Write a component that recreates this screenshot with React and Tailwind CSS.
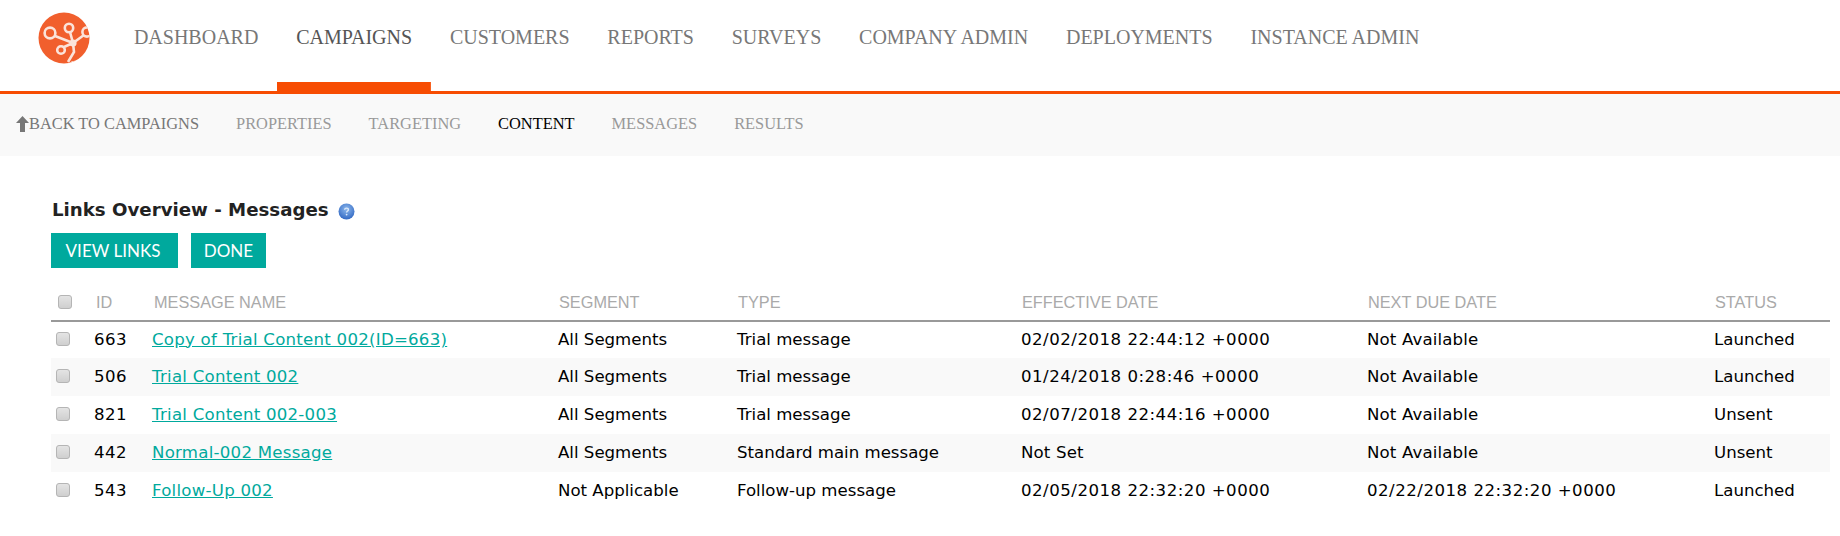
const mainNav = ['DASHBOARD', 'CAMPAIGNS', 'CUSTOMERS', 'REPORTS', 'SURVEYS', 'COMPANY ADMIN', 'DEPLOYMENTS', 'INSTANCE ADMIN']
const subNav = ['PROPERTIES', 'TARGETING', 'CONTENT', 'MESSAGES', 'RESULTS']

const messages = [
  { id: 663, name: 'Copy of Trial Content 002(ID=663)', segment: 'All Segments', type: 'Trial message', effective: '02/02/2018 22:44:12 +0000', next: 'Not Available', status: 'Launched' },
  { id: 506, name: 'Trial Content 002', segment: 'All Segments', type: 'Trial message', effective: '01/24/2018 0:28:46 +0000', next: 'Not Available', status: 'Launched' },
  { id: 821, name: 'Trial Content 002-003', segment: 'All Segments', type: 'Trial message', effective: '02/07/2018 22:44:16 +0000', next: 'Not Available', status: 'Unsent' },
  { id: 442, name: 'Normal-002 Message', segment: 'All Segments', type: 'Standard main message', effective: 'Not Set', next: 'Not Available', status: 'Unsent' },
  { id: 543, name: 'Follow-Up 002', segment: 'Not Applicable', type: 'Follow-up message', effective: '02/05/2018 22:32:20 +0000', next: '02/22/2018 22:32:20 +0000', status: 'Launched' },
]

const headers = [
  { label: 'ID', className: 'pl-[7px]' },
  { label: 'MESSAGE NAME', className: 'pl-[7px]' },
  { label: 'SEGMENT', className: 'pl-[6px]' },
  { label: 'TYPE', className: 'pl-[6px]' },
  { label: 'EFFECTIVE DATE', className: 'pl-[6px]' },
  { label: 'NEXT DUE DATE', className: 'pl-[6px]' },
  { label: 'STATUS', className: 'pl-[6px]' },
]

// dates run wider than the words in the original font
function dateTracking(value) {
  return value.startsWith('0') ? 'tracking-[0.5px]' : 'tracking-[0.15px]'
}

function Logo() {
  return (
    <svg width="52" height="52" viewBox="0 0 52 52" className="block">
      <defs>
        <clipPath id="logo-clip"><circle cx="26" cy="26" r="25.5" /></clipPath>
      </defs>
      <circle cx="26" cy="26" r="25.5" fill="#f15f2d" />
      <g clipPath="url(#logo-clip)" fill="none" stroke="#fbe3da" strokeWidth="2.6">
        <circle cx="12" cy="21" r="5.4" />
        <circle cx="31" cy="16" r="4.2" />
        <circle cx="23" cy="38" r="3.8" />
        <circle cx="49" cy="20" r="4.6" />
        <circle cx="37" cy="57" r="7" />
        <path d="M17 24 L35 31 M32 20 L35 31 M26 35 L35 31 M35 31 L46 23 M35 31 L36 40 L30 50" />
        <circle cx="35" cy="31" r="3.6" fill="#fbe3da" stroke="none" />
      </g>
    </svg>
  )
}

function HelpIcon() {
  return (
    <svg width="17" height="17" viewBox="0 0 17 17" className="ml-[9px] mt-[3px] block">
      <defs>
        <radialGradient id="help-fill" cx="50%" cy="35%" r="65%">
          <stop offset="0%" stopColor="#8db8ec" />
          <stop offset="100%" stopColor="#3269c4" />
        </radialGradient>
      </defs>
      <circle cx="8.5" cy="8.5" r="8" fill="url(#help-fill)" />
      <path d="M6.6 6.8 C6.7 5.6 7.5 5.1 8.5 5.1 C9.6 5.1 10.4 5.7 10.4 6.7 C10.4 8 8.6 8 8.6 9.5" fill="none" stroke="#dbe8fa" strokeWidth="1.4" />
      <circle cx="8.6" cy="11.6" r="0.9" fill="#dbe8fa" />
    </svg>
  )
}

function CheckBox({ className }) {
  return <input type="checkbox" className={`block h-[14px] w-[14px] appearance-none rounded-[3px] border border-[#b5b5b5] bg-gradient-to-b from-[#e4e4e4] to-[#cfcfcf] ${className}`} />
}

export default function App() {
  return (
    <div className="min-h-[536px] bg-white font-['Liberation_Serif',serif]">
      <header className="flex h-[91px] items-start">
        <div className="ml-[38px] mt-[12px] w-[52px]"><Logo /></div>
        <nav className="ml-[25px] flex text-[20px] leading-[24px] text-[#777]">
          {mainNav.map((item) => (
            <a key={item} className={`block h-[91px] px-[18.9px] pt-[25px] ${item === 'CAMPAIGNS' ? 'bg-[linear-gradient(#f74c02,#f74c02)] bg-[length:100%_9px] bg-bottom bg-no-repeat text-[#555]' : ''}`}>
              {item}
            </a>
          ))}
        </nav>
      </header>
      <div className="h-[3px] bg-[#f74c02]" />

      <div className="flex h-[62px] items-center bg-[#f9f9f9] pb-[2px] pl-[16px] text-[16.4px] text-[#999]">
        <svg width="13" height="16" viewBox="0 0 13 16" className="block">
          <path d="M6.5 0 L13 7 H9 V16 H4 V7 H0 Z" fill="#777" />
        </svg>
        <a className="mr-[37px] text-[#777]">BACK TO CAMPAIGNS</a>
        {subNav.map((item) => (
          <a key={item} className={`mr-[37px] ${item === 'CONTENT' ? 'text-black' : ''}`}>{item}</a>
        ))}
      </div>

      <main className="pl-[51px] pr-[10px] pt-[36px]">
        <div className="flex h-[35px] items-center pl-px font-['DejaVu_Sans',sans-serif] font-bold leading-[24px] text-[#222]">
          <h1 className="text-[18.2px]">Links Overview - Messages</h1>
          <HelpIcon />
        </div>
        <div className="mt-[6px] flex gap-[13px] font-['Lato',sans-serif] text-[17px] text-white">
          <button className="h-[35px] w-[127px] bg-[#00a99d] pr-[3px]">VIEW LINKS</button>
          <button className="h-[35px] w-[75px] bg-[#00a99d]">DONE</button>
        </div>

        <table className="mt-[19px] w-[1779px] table-fixed border-collapse font-['DejaVu_Sans',sans-serif] text-[16.6px] text-black">
          <colgroup>
            <col className="w-[38px]" />
            <col className="w-[58px]" />
            <col className="w-[406px]" />
            <col className="w-[179px]" />
            <col className="w-[284px]" />
            <col className="w-[346px]" />
            <col className="w-[347px]" />
            <col className="w-[121px]" />
          </colgroup>
          <thead>
            <tr className="h-[34px] border-b-2 border-[#999] font-['Liberation_Sans',sans-serif] text-[16.3px] text-[#aaa]">
              <th className="pb-[3px] pl-[7px]"><CheckBox /></th>
              {headers.map((header) => (
                <th key={header.label} className={`${header.className} pb-[3px] text-left font-normal`}>{header.label}</th>
              ))}
            </tr>
          </thead>
          <tbody>
            {messages.map((message, index) => (
              <tr key={message.id} className={`${index === 0 ? 'h-[37px]' : 'h-[38px]'} ${index % 2 === 1 ? 'bg-[#f9f9f9]' : ''}`}>
                <td className="pl-[5px]"><CheckBox className="-mt-[2px]" /></td>
                <td className="pl-[5px] tracking-[0.4px]">{message.id}</td>
                <td className="pl-[5px] tracking-[0.25px]"><a className="text-[#00a99d] underline">{message.name}</a></td>
                <td className="pl-[5px]">{message.segment}</td>
                <td className="pl-[5px]">{message.type}</td>
                <td className={`pl-[5px] ${dateTracking(message.effective)}`}>{message.effective}</td>
                <td className={`pl-[5px] ${dateTracking(message.next)}`}>{message.next}</td>
                <td className="pl-[5px]">{message.status}</td>
              </tr>
            ))}
          </tbody>
        </table>
      </main>
    </div>
  )
}
